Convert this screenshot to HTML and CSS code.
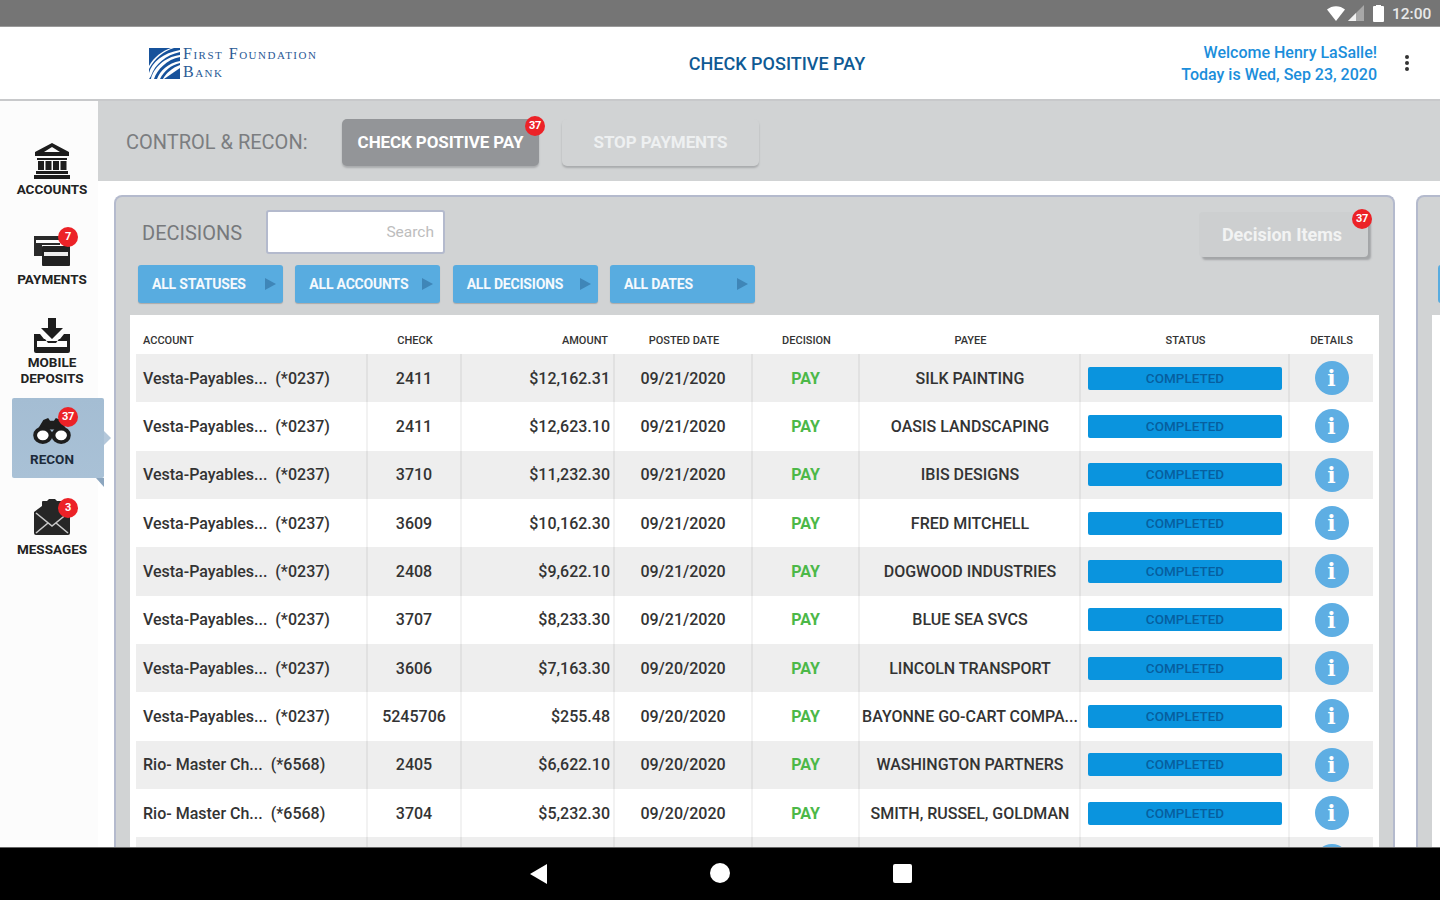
FILE: index.html
```html
<!DOCTYPE html>
<html lang="en">
<head>
<meta charset="utf-8">
<title>Check Positive Pay</title>
<link rel="stylesheet" href="styles.css">
</head>
<body>
<div class="screen">
  <div class="statusbar">
    <svg class="st-wifi" viewBox="0 0 18 15"><path d="M0 3.500C5-1 13-1 18 3.500L9 15z" fill="#fff"/></svg>
    <svg class="st-signal" viewBox="0 0 16 16"><path d="M0 16 16 0v16z" fill="#a8a8a8"/><path d="M0 16 8 8v8z" fill="#f2f2f2"/></svg>
    <svg class="st-batt" viewBox="0 0 11 17"><path d="M3 1V0h5v1h2a1 1 0 0 1 1 1v14a1 1 0 0 1-1 1H1a1 1 0 0 1-1-1V2a1 1 0 0 1 1-1z" fill="#fff"/></svg>
    <span class="st-time">12:00</span>
  </div>

  <header class="appbar">
    <div class="logo">
      <svg class="logo-mark" viewBox="0 0 31 31">
        <rect width="31" height="31" fill="#17529b"/>
        <path d="M2 31C4 21 15 9 31 7v2C18 11 8 22 5 31zM0 25C3 14 14 5 31 2v2C17 7 6 16 2 28l-2 3zM0 18C5 9 13 3 22 0h3C15 3 6 10 0 21zM8 31C11 23 19 15 31 13v2C22 17 15 23 11 31z" fill="#fff"/>
        <path d="M15 31 31 20v-3C23 20 17 25 14 31z" fill="#fff"/>
      </svg>
      <div class="logo-text"><span>First Foundation</span><span>Bank</span></div>
    </div>
    <h1 class="title">CHECK POSITIVE PAY</h1>
    <div class="welcome">
      <div class="welcome-text"><div>Welcome Henry LaSalle!</div><div>Today is Wed, Sep 23, 2020</div></div>
      <div class="kebab"><i></i><i></i><i></i></div>
    </div>
  </header>

  <div class="main">
    <nav class="sidebar">
      <a class="nav-item nav-accounts">
        <svg class="nav-icon" viewBox="0 0 36 36"><path d="M18 0 35 9v4H1V9zm0 4 -8 5h16z" fill="#1d1d1d" fill-rule="evenodd"/><path d="M3 15h30v2H3zM4 18h6v9H4zM11.500 18h6v9h-6zM19 18h6v9h-6zM26.500 18h6v9h-6zM2 28h32v3H2zM0 32h36v4H0z" fill="#1d1d1d"/></svg>
        <span>ACCOUNTS</span>
      </a>
      <a class="nav-item nav-payments">
        <svg class="nav-icon" viewBox="0 0 36 36"><path d="M0 3h28v6h-2V7H2v3h24v2H8v11H0z" fill="#2a2a2a"/><rect x="8" y="13" width="28" height="20" rx="1" fill="#222"/><rect x="10" y="19" width="24" height="4" fill="#eee"/></svg>
        <span class="badge">7</span>
        <span>PAYMENTS</span>
      </a>
      <a class="nav-item nav-deposits">
        <svg class="nav-icon" viewBox="0 0 36 36"><path d="M14 0h8v10h7L18 21 7 10h7z" fill="#1d1d1d"/><path d="M0 16h6l4 5H3v8h30v-8h-7l4-5h6v17a2 2 0 0 1-2 2H2a2 2 0 0 1-2-2z" fill="#1d1d1d"/><path d="M3 21h8l3 4h8l3-4h8v2H3z" fill="#1d1d1d"/></svg>
        <span>MOBILE<br>DEPOSITS</span>
      </a>
      <a class="nav-item nav-recon active">
        <svg class="nav-icon" viewBox="0 0 40 28"><path d="M5 13 11 3l5-2 2 3h4l2-3 5 2 6 10z" fill="#1d1d1d"/><ellipse cx="10.500" cy="19" rx="8" ry="7" fill="#fff" stroke="#1d1d1d" stroke-width="4"/><ellipse cx="29.500" cy="19" rx="8" ry="7" fill="#fff" stroke="#1d1d1d" stroke-width="4"/></svg>
        <span class="badge">37</span>
        <span>RECON</span>
      </a>
      <a class="nav-item nav-messages">
        <svg class="nav-icon" viewBox="0 0 36 36"><path d="M0 13 8 7V3a1 1 0 0 1 1-1h4l2-2h6l2 2h4a1 1 0 0 1 1 1v4l8 6v21a2 2 0 0 1-2 2H2a2 2 0 0 1-2-2z" fill="#262626"/><path d="M2 14 18 27 34 14M2 34l12-10M34 34 22 24" fill="none" stroke="#c8c8c8" stroke-width="1.600"/></svg>
        <span class="badge">3</span>
        <span>MESSAGES</span>
      </a>
    </nav>

    <div class="content">
      <div class="subheader">
        <span class="sub-label">CONTROL &amp; RECON:</span>
        <button class="tab tab-on">CHECK POSITIVE PAY<span class="badge">37</span></button>
        <button class="tab">STOP PAYMENTS</button>
      </div>

      <div class="panels">
        <section class="panel">
          <div class="panel-head">
            <h2 class="panel-title">DECISIONS</h2>
            <div class="search">Search</div>
            <button class="decision-btn">Decision Items<span class="badge">37</span></button>
          </div>
          <div class="filters">
            <button class="filter">ALL STATUSES<i></i></button>
            <button class="filter">ALL ACCOUNTS<i></i></button>
            <button class="filter">ALL DECISIONS<i></i></button>
            <button class="filter">ALL DATES<i></i></button>
          </div>
          <div class="table">
            <div class="row row-head">
              <div class="c-account">ACCOUNT</div><div>CHECK</div><div class="c-amount">AMOUNT</div><div>POSTED DATE</div><div>DECISION</div><div>PAYEE</div><div>STATUS</div><div>DETAILS</div>
            </div>
            <div class="row"><div class="c-account">Vesta-Payables...  (*0237)</div><div>2411</div><div class="c-amount">$12,162.31</div><div>09/21/2020</div><div class="c-pay">PAY</div><div class="c-payee">SILK PAINTING</div><div><span class="pill">COMPLETED</span></div><div><span class="info">i</span></div></div>
            <div class="row"><div class="c-account">Vesta-Payables...  (*0237)</div><div>2411</div><div class="c-amount">$12,623.10</div><div>09/21/2020</div><div class="c-pay">PAY</div><div class="c-payee">OASIS LANDSCAPING</div><div><span class="pill">COMPLETED</span></div><div><span class="info">i</span></div></div>
            <div class="row"><div class="c-account">Vesta-Payables...  (*0237)</div><div>3710</div><div class="c-amount">$11,232.30</div><div>09/21/2020</div><div class="c-pay">PAY</div><div class="c-payee">IBIS DESIGNS</div><div><span class="pill">COMPLETED</span></div><div><span class="info">i</span></div></div>
            <div class="row"><div class="c-account">Vesta-Payables...  (*0237)</div><div>3609</div><div class="c-amount">$10,162.30</div><div>09/21/2020</div><div class="c-pay">PAY</div><div class="c-payee">FRED MITCHELL</div><div><span class="pill">COMPLETED</span></div><div><span class="info">i</span></div></div>
            <div class="row"><div class="c-account">Vesta-Payables...  (*0237)</div><div>2408</div><div class="c-amount">$9,622.10</div><div>09/21/2020</div><div class="c-pay">PAY</div><div class="c-payee">DOGWOOD INDUSTRIES</div><div><span class="pill">COMPLETED</span></div><div><span class="info">i</span></div></div>
            <div class="row"><div class="c-account">Vesta-Payables...  (*0237)</div><div>3707</div><div class="c-amount">$8,233.30</div><div>09/21/2020</div><div class="c-pay">PAY</div><div class="c-payee">BLUE SEA SVCS</div><div><span class="pill">COMPLETED</span></div><div><span class="info">i</span></div></div>
            <div class="row"><div class="c-account">Vesta-Payables...  (*0237)</div><div>3606</div><div class="c-amount">$7,163.30</div><div>09/20/2020</div><div class="c-pay">PAY</div><div class="c-payee">LINCOLN TRANSPORT</div><div><span class="pill">COMPLETED</span></div><div><span class="info">i</span></div></div>
            <div class="row"><div class="c-account">Vesta-Payables...  (*0237)</div><div>5245706</div><div class="c-amount">$255.48</div><div>09/20/2020</div><div class="c-pay">PAY</div><div class="c-payee">BAYONNE GO-CART COMPA...</div><div><span class="pill">COMPLETED</span></div><div><span class="info">i</span></div></div>
            <div class="row"><div class="c-account">Rio- Master Ch...  (*6568)</div><div>2405</div><div class="c-amount">$6,622.10</div><div>09/20/2020</div><div class="c-pay">PAY</div><div class="c-payee">WASHINGTON PARTNERS</div><div><span class="pill">COMPLETED</span></div><div><span class="info">i</span></div></div>
            <div class="row"><div class="c-account">Rio- Master Ch...  (*6568)</div><div>3704</div><div class="c-amount">$5,232.30</div><div>09/20/2020</div><div class="c-pay">PAY</div><div class="c-payee">SMITH, RUSSEL, GOLDMAN</div><div><span class="pill">COMPLETED</span></div><div><span class="info">i</span></div></div>
            <div class="row"><div></div><div></div><div></div><div></div><div></div><div></div><div></div><div><span class="info"></span></div></div>
          </div>
        </section>
        <section class="panel panel-next">
          <div class="next-filter"></div>
          <div class="next-table"></div>
        </section>
      </div>
    </div>
  </div>

  <div class="navbar">
    <svg class="nb-back" viewBox="0 0 17 20"><path d="M17 0v20L0 10z" fill="#fff"/></svg>
    <span class="nb-home"></span>
    <span class="nb-recent"></span>
  </div>
</div>
</body>
</html>
```
FILE: styles.css
```css
* { box-sizing: border-box; }
html, body { margin: 0; padding: 0; }
body { font-family: Roboto, "Liberation Sans", sans-serif; background: #fff; }
button { font-family: inherit; border: 0; padding: 0; }
h1, h2 { margin: 0; font-weight: inherit; }

.screen { width: 1440px; height: 900px; display: flex; flex-direction: column; overflow: hidden; }

/* status bar */
.statusbar { height: 27px; flex: none; background: #757575; border-bottom: 1px solid #9a9a9a; display: flex; align-items: center; justify-content: flex-end; padding-right: 8px; }
.st-wifi { width: 18px; height: 15px; margin-right: 3px; }
.st-signal { width: 16px; height: 16px; margin-right: 9px; }
.st-batt { width: 11px; height: 17px; margin-right: 8px; }
.st-time { color: #e8e8e8; font-size: 15.500px; font-weight: 500; width: 40px; padding-top: 2px; }

/* app bar */
.appbar { height: 74px; flex: none; background: #fff; border-bottom: 2px solid #c8c9cb; display: grid; grid-template-columns: 489px 576px 1fr; align-items: center; }
.logo { padding-left: 149px; display: flex; align-items: center; gap: 3px; }
.logo-mark { width: 31px; height: 31px; }
.logo-text { display: flex; flex-direction: column; font-family: "Liberation Serif", serif; font-variant: small-caps; font-size: 16px; line-height: 18.400px; color: #2a5a96; letter-spacing: 1.500px; }
.title { text-align: center; font-size: 18px; font-weight: 500; color: #0f5a94; }
.welcome { display: flex; justify-content: flex-end; align-items: center; padding-right: 31px; }
.welcome-text { text-align: right; color: #1b8edb; font-size: 16px; font-weight: 500; line-height: 22px; padding-top: 2px; }
.kebab { margin-left: 28px; display: flex; flex-direction: column; gap: 2px; }
.kebab i { width: 4px; height: 4px; border-radius: 50%; background: #333; }

/* layout */
.main { flex: 1; display: flex; min-height: 0; }
.sidebar { width: 98px; flex: none; background: #fcfcfc; padding-top: 42px; display: flex; flex-direction: column; position: relative; z-index: 2; }
.content { flex: 1; min-width: 0; display: flex; flex-direction: column; }

/* sidebar */
.nav-item { position: relative; display: flex; flex-direction: column; align-items: center; width: 92px; margin-left: 6px; font-size: 13.500px; font-weight: 700; line-height: 16px; color: #222; text-align: center; }
.nav-icon { width: 36px; height: 36px; flex: none; }
.nav-accounts { height: 53px; }
.nav-accounts span { margin-top: 2px; }
.nav-payments { margin-top: 37px; height: 54px; }
.nav-payments span:last-child { margin-top: 2px; }
.nav-deposits { margin-top: 31px; height: 62px; }
.nav-deposits span { margin-top: 0; }
.nav-recon { margin-top: 18px; margin-left: 12px; padding: 19px 12px 0 0; height: 80px; background: linear-gradient(#a4bdd3, #a9c1d6); border-radius: 2px; }
.nav-recon .nav-icon { height: 27px; width: 40px; }
.nav-recon span:last-child { margin-top: 7px; color: #1c2a3a; }
.nav-recon::after { content: ""; position: absolute; right: -7px; top: 33px; border-left: 7px solid #b3c7da; border-top: 7px solid transparent; border-bottom: 7px solid transparent; }
.nav-recon::before { content: ""; position: absolute; right: 0; bottom: -9px; border-right: 8px solid #8ca6bf; border-bottom: 9px solid transparent; }
.nav-messages { margin-top: 21px; height: 60px; }
.nav-messages span:last-child { margin-top: 6px; }

.badge { position: absolute; width: 20px; height: 20px; border-radius: 50%; background: #ec2227; color: #fff; font-size: 11px; font-weight: 700; line-height: 20px; text-align: center; letter-spacing: -.3px; }
.nav-item .badge { right: 20px; }
.nav-payments .badge { top: -6px; }
.nav-recon .badge { top: 9px; right: 26px; }
.nav-messages .badge { top: -1px; }

/* subheader */
.subheader { height: 80px; flex: none; background: #d1d3d4; display: flex; align-items: center; padding: 4px 0 2px 28px; }
.sub-label { font-size: 20px; color: #7b7d80; width: 216px; }
.tab { width: 197px; height: 47px; margin-right: 23px; border-radius: 5px; background: #d1d3d4; color: #eef0f1; font-size: 17px; font-weight: 700; box-shadow: 0 2px 2px #a9abad; position: relative; letter-spacing: -.1px; }
.tab-on { background: #939598; color: #fff; }
.tab .badge { right: -6px; top: -3px; }

/* panels */
.panels { flex: 1; min-height: 0; display: flex; gap: 21px; padding: 14px 0 0 16px; }
.panel { width: 1281px; flex: none; background: #d1d3d4; border: 2px solid #b4bacd; border-bottom: 0; border-radius: 8px 8px 0 0; padding: 13px 14px 0; overflow: hidden; }
.panel-next { width: 60px; padding: 0; position: relative; }
.next-filter { position: absolute; left: 20px; top: 68px; width: 30px; height: 38px; background: #58ace0; border-radius: 3px; }
.next-table { position: absolute; left: 14px; top: 118px; width: 40px; height: 700px; background: #fff; }
.panel-head { display: flex; align-items: flex-start; height: 47px; padding-left: 12px; position: relative; }
.panel-title { font-size: 20px; color: #77797c; width: 124px; line-height: 46px; }
.search { width: 179px; height: 44px; background: #fff; border: 2px solid #b4bacd; border-radius: 3px; text-align: right; padding-right: 9px; font-size: 15.500px; line-height: 41px; color: #bdbdbd; }
.decision-btn { margin-left: auto; margin-right: 11px; margin-top: 2px; width: 169px; height: 45px; padding-right: 3px; background: #cdcfd0; color: #f2f3f3; font-size: 18px; font-weight: 700; border-radius: 4px; box-shadow: 3px 3px 2px #a3a5a7; position: relative; }
.decision-btn .badge { right: -4px; top: -3px; }
.filters { display: flex; gap: 12.330px; margin: 8px 0 12px 8px; }
.filter { width: 145px; height: 38px; background: #58ace0; color: #f4f9fd; font-size: 14px; font-weight: 700; border-radius: 3px; text-align: left; padding-left: 14px; position: relative; box-shadow: 0 1px 1px #aaa; letter-spacing: -.2px; }
.filter i { position: absolute; right: 7px; top: 13px; border-left: 11px solid #3f86b8; border-top: 6px solid transparent; border-bottom: 6px solid transparent; }

/* table */
.table { background: #fff; padding: 0 6px; height: 700px; }
.row { display: grid; grid-template-columns: 232px 94px 153px 138px 107px 221px 209px 83px; height: 48.330px; align-items: stretch; font-size: 16px; font-weight: 500; color: #333; }
.row:nth-child(even) { background: #eee; }
.row > div { display: flex; align-items: center; justify-content: center; border-right: 2px solid rgba(0, 0, 0, .05); min-width: 0; white-space: nowrap; overflow: hidden; }
.row > div:last-child { border-right: 0; }
.row .c-account { justify-content: flex-start; padding-left: 7px; white-space: pre; }
.row .c-amount { justify-content: flex-end; padding-right: 3px; }
.c-pay { color: #4cb848; font-weight: 700; }
.row .c-payee { padding: 0 1px 0 2px; }
.row-head { height: 39px; font-size: 11px; font-weight: 500; color: #333; padding-top: 11px; }
.row-head > div { border-right: 0; }
.row-head .c-amount { padding-right: 7px; }
.pill { width: 194px; height: 23px; margin-left: 1px; background: #0a94de; border-radius: 2px; color: #075f9f; font-size: 13.500px; font-weight: 500; text-align: center; line-height: 23px; }
.info { width: 34px; height: 34px; border-radius: 50%; background: #5eaee3; color: #fff; font-family: "DejaVu Serif", serif; font-weight: 700; font-size: 22px; line-height: 34px; text-align: center; }

/* nav bar */
.navbar { height: 53px; flex: none; background: #000; border-top: 1px solid #666; position: relative; }
.nb-back { position: absolute; left: 530px; top: 16px; width: 17px; height: 20px; }
.nb-home { position: absolute; left: 710px; top: 15px; width: 20px; height: 20px; border-radius: 50%; background: #fff; }
.nb-recent { position: absolute; left: 893px; top: 16px; width: 19px; height: 19px; border-radius: 2px; background: #fff; }
```
